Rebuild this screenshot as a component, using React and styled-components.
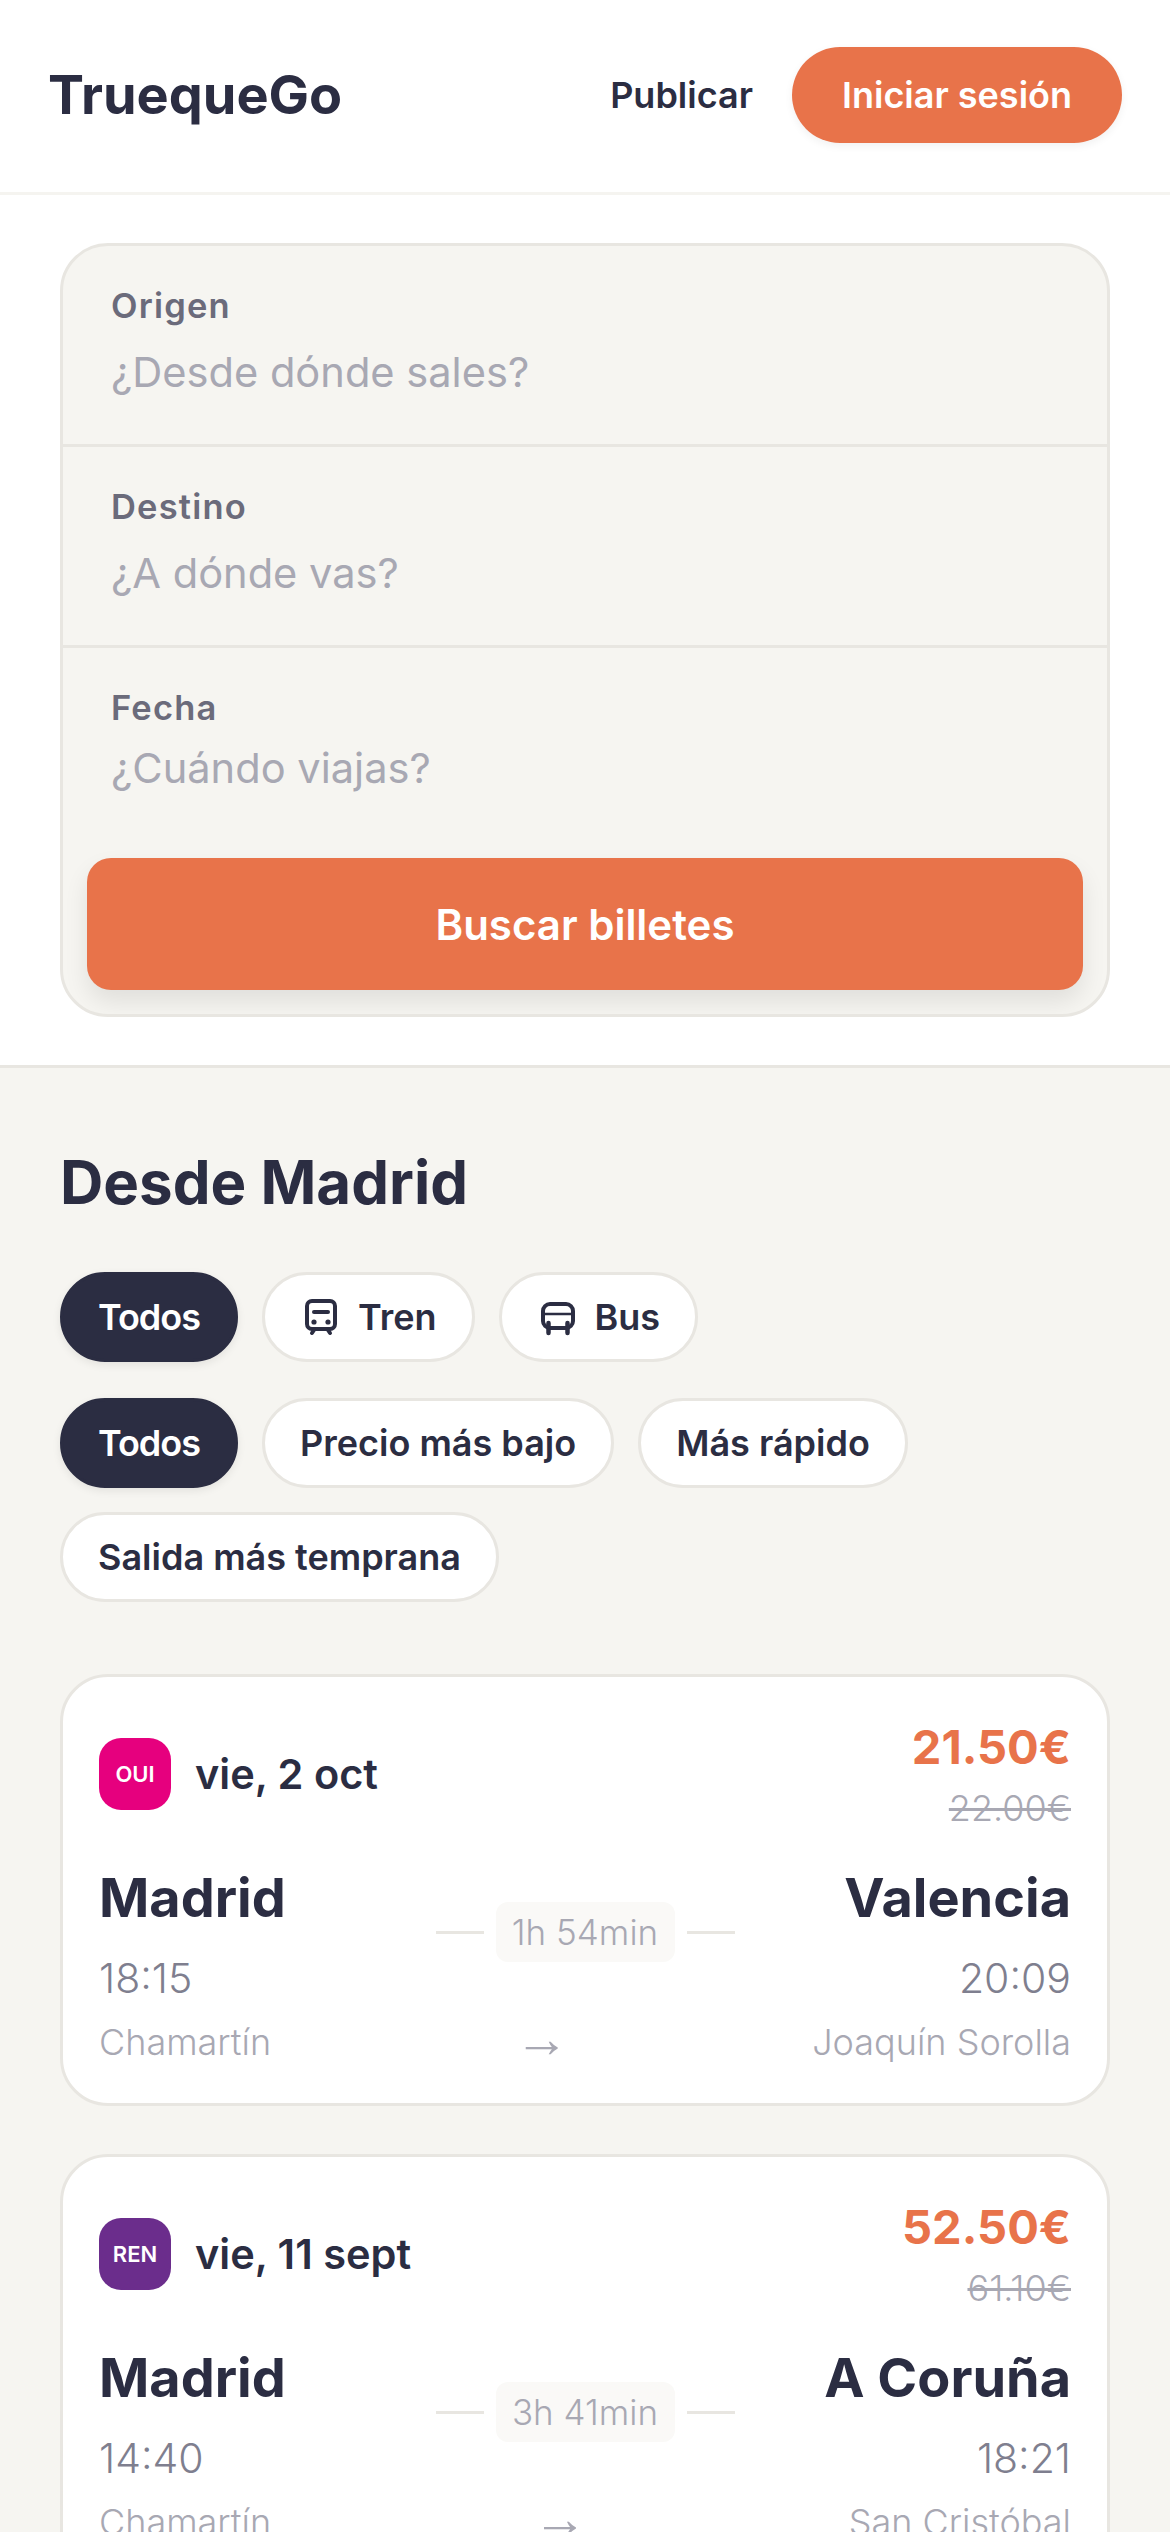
import React from "react";
import styled, { createGlobalStyle } from "styled-components";

const GlobalStyle = createGlobalStyle`
  html, body {
    margin: 0;
    padding: 0;
    background: #f6f5f1;
  }
  * {
    box-sizing: border-box;
  }
  body {
    font-family: Inter, "Liberation Sans", sans-serif;
    color: #2b2d42;
  }
`;

const trips = [
  {
    code: "OUI",
    brand: "#e6007e",
    date: "vie, 2 oct",
    price: "21.50€",
    oldPrice: "22.00€",
    from: "Madrid",
    to: "Valencia",
    departs: "18:15",
    arrives: "20:09",
    duration: "1h 54min",
    fromStation: "Chamartín",
    toStation: "Joaquín Sorolla",
  },
  {
    code: "REN",
    brand: "#6b2d8c",
    date: "vie, 11 sept",
    price: "52.50€",
    oldPrice: "61.10€",
    from: "Madrid",
    to: "A Coruña",
    departs: "14:40",
    arrives: "18:21",
    duration: "3h 41min",
    fromStation: "Chamartín",
    toStation: "San Cristóbal",
  },
];

function TrainIcon() {
  return (
    <svg width="42" height="42" viewBox="0 0 42 42" fill="none" stroke="#2b2d42" strokeWidth="4" strokeLinecap="round" strokeLinejoin="round">
      <rect x="7" y="5" width="28" height="28" rx="5" />
      <path d="M14 16h14" />
      <path d="M14 34l-2 3M28 34l2 3" />
      <circle cx="14" cy="26" r="2.6" fill="#2b2d42" stroke="none" />
      <circle cx="28" cy="26" r="2.6" fill="#2b2d42" stroke="none" />
    </svg>
  );
}

function BusIcon() {
  return (
    <svg width="42" height="42" viewBox="0 0 42 42" fill="none" stroke="#2b2d42" strokeWidth="4" strokeLinecap="round" strokeLinejoin="round">
      <rect x="6" y="8" width="30" height="24" rx="7" />
      <path d="M6 18h30" strokeWidth="2.5" />
      <path d="M11.5 27v10M30.5 27v10" strokeWidth="4.5" />
    </svg>
  );
}

function App() {
  return (
    <Page>
      <GlobalStyle />
      <Header>
        <Logo>TruequeGo</Logo>
        <Nav>
          <NavLink>Publicar</NavLink>
          <LoginButton>Iniciar sesión</LoginButton>
        </Nav>
      </Header>

      <SearchSection>
        <SearchCard>
          <Field>
            <FieldLabel>Origen</FieldLabel>
            <FieldHint>¿Desde dónde sales?</FieldHint>
          </Field>
          <Field>
            <FieldLabel>Destino</FieldLabel>
            <FieldHint>¿A dónde vas?</FieldHint>
          </Field>
          <Field $last>
            <FieldLabel>Fecha</FieldLabel>
            <FieldHint>¿Cuándo viajas?</FieldHint>
          </Field>
          <SearchButton>Buscar billetes</SearchButton>
        </SearchCard>
      </SearchSection>

      <Results>
        <Title>Desde Madrid</Title>
        <PillRow>
          <Pill $active>Todos</Pill>
          <Pill><TrainIcon />Tren</Pill>
          <Pill><BusIcon />Bus</Pill>
        </PillRow>
        <SortRow>
          <Pill $active>Todos</Pill>
          <Pill>Precio más bajo</Pill>
          <Pill>Más rápido</Pill>
          <Pill>Salida más temprana</Pill>
        </SortRow>
        <TripList>
          {trips.map((trip) => (
            <TripCard key={trip.code}>
              <TripTop>
                <Operator>
                  <Badge $color={trip.brand}>{trip.code}</Badge>
                  <TripDate>{trip.date}</TripDate>
                </Operator>
                <Prices>
                  <Price>{trip.price}</Price>
                  <OldPrice>{trip.oldPrice}</OldPrice>
                </Prices>
              </TripTop>
              <Route>
                <Stop>
                  <City>{trip.from}</City>
                  <Time>{trip.departs}</Time>
                </Stop>
                <Duration>
                  <DurationLine />
                  <DurationBox>{trip.duration}</DurationBox>
                  <DurationLine />
                </Duration>
                <Stop $right>
                  <City>{trip.to}</City>
                  <Time>{trip.arrives}</Time>
                </Stop>
              </Route>
              <Stations>
                <Station>{trip.fromStation}</Station>
                <Arrow>→</Arrow>
                <Station>{trip.toStation}</Station>
              </Stations>
            </TripCard>
          ))}
        </TripList>
      </Results>
    </Page>
  );
}
export default App;

const Page = styled.div`
  width: 1170px;
  height: 2532px;
  overflow: hidden;
  background: #f6f5f1;
`;

const Header = styled.header`
  display: flex;
  align-items: center;
  justify-content: space-between;
  height: 195px;
  padding: 0 48px 3px;
  background: #fff;
  border-bottom: 3px solid #f5f4f0;
`;

const Logo = styled.div`
  font-size: 54px;
  font-weight: 700;
  color: #2b2d42;
`;

const Nav = styled.nav`
  display: flex;
  align-items: center;
  gap: 39px;
`;

const NavLink = styled.span`
  font-size: 36px;
  font-weight: 600;
  color: #2b2d42;
`;

const LoginButton = styled.div`
  display: flex;
  align-items: center;
  justify-content: center;
  width: 330px;
  height: 96px;
  border-radius: 48px;
  background: #e8734a;
  color: #fff;
  font-size: 36px;
  font-weight: 600;
  box-shadow: 0 3px 9px rgba(0, 0, 0, 0.06);
`;

const SearchSection = styled.section`
  background: #fff;
  padding: 48px 60px 48px;
  border-bottom: 3px solid #e8e6e1;
`;

const SearchCard = styled.div`
  background: #f6f5f1;
  border: 3px solid #e8e6e1;
  border-radius: 48px;
  padding-bottom: 24px;
  overflow: hidden;
`;

const Field = styled.div`
  display: flex;
  flex-direction: column;
  height: ${(p) => (p.$last ? "210px" : "201px")};
  padding: 42px 48px 0;
  gap: ${(p) => (p.$last ? "18px" : "24px")};
  border-bottom: ${(p) => (p.$last ? "none" : "3px solid #e8e6e1")};
`;

const FieldLabel = styled.label`
  font-size: 34.5px;
  line-height: 36px;
  font-weight: 600;
  letter-spacing: 1.2px;
  color: #6b6b7b;
`;

const FieldHint = styled.span`
  font-size: 41.6px;
  line-height: 48px;
  color: #a8a8b3;
`;

const SearchButton = styled.div`
  display: flex;
  align-items: center;
  justify-content: center;
  height: 132px;
  margin: 0 24px;
  border-radius: 24px;
  background: #e8734a;
  color: #fff;
  font-size: 42px;
  font-weight: 600;
  box-shadow: 0 12px 24px rgba(0, 0, 0, 0.09);
`;

const Results = styled.section`
  padding: 78px 60px 0;
`;

const Title = styled.h2`
  margin: 0 0 54px;
  font-size: 60px;
  line-height: 72px;
  font-weight: 700;
  color: #2b2d42;
`;

const PillRow = styled.div`
  display: flex;
  flex-wrap: wrap;
  gap: 24px;
`;

const SortRow = styled(PillRow)`
  margin-top: 36px;
`;

const Pill = styled.div`
  display: flex;
  align-items: center;
  gap: 16px;
  height: 90px;
  padding: 0 35px;
  border-radius: 45px;
  border: 3px solid ${(p) => (p.$active ? "#2b2d42" : "#e8e6e1")};
  background: ${(p) => (p.$active ? "#2b2d42" : "#fff")};
  color: ${(p) => (p.$active ? "#fff" : "#2b2d42")};
  font-size: 36px;
  font-weight: 600;
  letter-spacing: ${(p) => (p.$active ? "-1px" : "0")};
  box-shadow: ${(p) => (p.$active ? "0 3px 9px rgba(0, 0, 0, 0.08)" : "none")};
`;

const TripList = styled.div`
  display: flex;
  flex-direction: column;
  gap: 48px;
  margin-top: 72px;
`;

const TripCard = styled.article`
  height: 432px;
  padding: 36px 36px 0;
  background: #fff;
  border: 3px solid #e8e6e1;
  border-radius: 48px;
  flex-shrink: 0;
`;

const TripTop = styled.div`
  display: flex;
  align-items: center;
  justify-content: space-between;
`;

const Operator = styled.div`
  display: flex;
  align-items: center;
  gap: 24px;
`;

const Badge = styled.div`
  display: flex;
  align-items: center;
  justify-content: center;
  width: 72px;
  height: 72px;
  border-radius: 22px;
  background: ${(p) => p.$color};
  color: #fff;
  font-size: 22px;
  font-weight: 600;
`;

const TripDate = styled.span`
  font-size: 41.5px;
  font-weight: 600;
  color: #2b2d42;
`;

const Prices = styled.div`
  display: flex;
  flex-direction: column;
  align-items: flex-end;
`;

const Price = styled.span`
  font-size: 47px;
  line-height: 68px;
  font-weight: 700;
  color: #e8734a;
`;

const OldPrice = styled.span`
  font-size: 36px;
  line-height: 54px;
  font-weight: 300;
  text-decoration: line-through;
  color: #a8a8b3;
`;

const Route = styled.div`
  display: grid;
  grid-template-columns: 1fr auto 1fr;
  align-items: center;
  margin-top: 30px;
`;

const Stop = styled.div`
  display: flex;
  flex-direction: column;
  align-items: ${(p) => (p.$right ? "flex-end" : "flex-start")};
  gap: 20px;
`;

const City = styled.span`
  font-size: 54px;
  line-height: 66px;
  font-weight: 700;
  color: #2b2d42;
`;

const Time = styled.span`
  font-size: 41px;
  line-height: 54px;
  font-weight: 300;
  color: #7f7f8f;
`;

const Duration = styled.div`
  display: flex;
  align-items: center;
  gap: 12px;
  margin-bottom: 6px;
`;

const DurationLine = styled.div`
  width: 48px;
  height: 3px;
  background: #e8e6e1;
`;

const DurationBox = styled.div`
  display: flex;
  align-items: center;
  justify-content: center;
  width: 179px;
  height: 60px;
  border-radius: 12px;
  background: #faf9f7;
  font-size: 35px;
  font-weight: 300;
  color: #a8a8b3;
`;

const Stations = styled.div`
  display: flex;
  align-items: center;
  justify-content: space-between;
  height: 54px;
  margin-top: 10px;
`;

const Station = styled.span`
  font-size: 36px;
  line-height: 54px;
  font-weight: 300;
  color: #a8a8b3;
`;

const Arrow = styled.span`
  font-family: "Liberation Sans", sans-serif;
  font-size: 54px;
  line-height: 54px;
  margin-bottom: 9px;
  color: #a8a8b3;
`;
